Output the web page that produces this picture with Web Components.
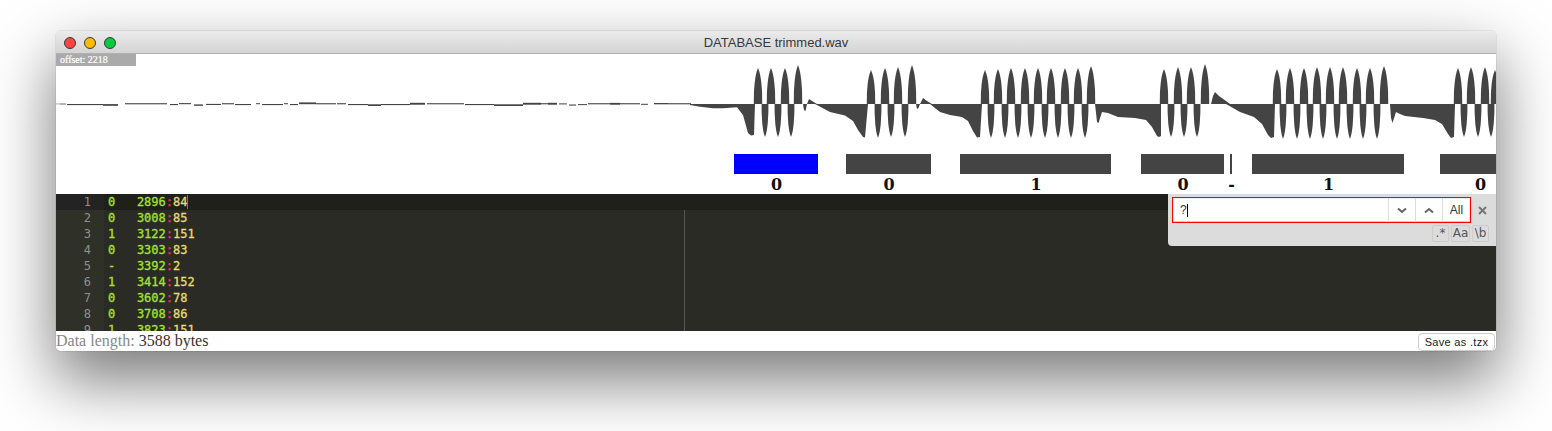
<!DOCTYPE html>
<html>
<head>
<meta charset="utf-8">
<title>DATABASE trimmed.wav</title>
<style>
  html, body { margin: 0; background: #fff; }
  body { padding: 31px 56px 0 56px; height: 431px; box-sizing: border-box; overflow: hidden; }
</style>
</head>
<body>
<app-window title="DATABASE trimmed.wav">
  <wave-view offset="2218"></wave-view>
  <bit-track>
    <bit-cell gap="678" size="84" label="0" active></bit-cell>
    <bit-cell gap="28" size="85" label="0"></bit-cell>
    <bit-cell gap="29" size="151" label="1"></bit-cell>
    <bit-cell gap="30" size="83" label="0"></bit-cell>
    <bit-cell gap="6" size="2" label="-"></bit-cell>
    <bit-cell gap="20" size="152" label="1"></bit-cell>
    <bit-cell gap="36" size="80" label="0"></bit-cell>
  </bit-track>
  <code-editor>
    <find-panel></find-panel>
  </code-editor>
  <status-bar>
    <span style="color:#888">Data length:</span> 3588 bytes
  </status-bar>
</app-window>

<script>
class AppWindow extends HTMLElement {
  constructor() {
    super();
    this.attachShadow({ mode: "open" });
  }
  connectedCallback() {
    this.shadowRoot.innerHTML = `
      <style>
        :host {
          display: block;
          width: 1440px;
          height: 320px;
          border-radius: 5px;
          overflow: hidden;
          background: #fff;
          box-shadow: 0 28px 64px 2px rgba(0,0,0,.52), 0 0 0 1px rgba(0,0,0,.06);
        }
        .bar {
          height: 22px;
          display: flex;
          align-items: center;
          justify-content: center;
          position: relative;
          background: linear-gradient(#ebebeb, #d4d4d4);
          border-bottom: 1px solid #b1b1b1;
          font: 13px "Liberation Sans", sans-serif;
          color: #383838;
        }
        .lights { position: absolute; left: 8px; top: 6px; display: flex; gap: 8px; }
        .lights i { display: block; width: 10px; height: 10px; border-radius: 50%; border: 1px solid; }
        .r { background: #ff4242; border-color: #f03a3a; }
        .y { background: #ffb900; border-color: #f0ae00; }
        .g { background: #00cc3c; border-color: #00c038; }
      </style>
      <div class="bar">
        <div class="lights"><i class="r"></i><i class="y"></i><i class="g"></i></div>
        ${this.getAttribute("title")}
      </div>
      <slot></slot>`;
  }
}

// thin bits of the quiet part before the tones start: x1, x2, y, height
const NOISE = [
  [60,66,103.6,.8],[67,103,104,1.1],[103,118,104.1,1.7],[125,167,103.2,1.1],[170,178,104,1.1],
  [179,191,103.1,1.1],[194,203,104.4,1.4],[206,221,103.9,1.1],[222,234,103.2,1.1],[235,251,104,1.1],
  [256,260,103.2,1],[262,283,104,1.1],[284,288,103.2,1],[290,298,104,1.1],[299,316,102.4,1.8],
  [316,336,103.2,1.1],[337,346,103.2,1.1],[348,368,104,1.1],[368,381,104.3,1.7],[381,410,104,1.1],
  [410,425,102.8,1.9],[427,464,103.2,1.1],[465,494,104,1.1],[494,523,104.3,1.7],[523,541,102.8,1.9],
  [541,548,103.2,1.1],[548,557,102.8,1.9],[559,567,103.4,1],[569,576,104.5,1.1],[578,587,104.1,1],
  [588,640,103.2,1.1],[610,620,102.9,1.7],[641,648,103.8,1],[654,668,103,1.3],[668,691,103.2,1.1]
];

// filled outline against the zero line, points are [x, y]
const ENVELOPES = [
  [[690,104],[690,105],[700,106.7],[713,108.3],[723,108.3],[737,107.3],[743,115],[748,133],[751,135.5],[754,135],[755,104]],
  [[803,104],[804,110],[805.5,111],[807,104],[809,99],[812,101],[817,104]],
  [[815,104],[830,112],[845,115.5],[853,121],[858,130],[863,137],[865,137.5],[868,104]],
  [[916,104],[917,109],[918.5,108],[920,104],[923,98],[927,101],[932,104]],
  [[930,104],[940,112],[950,115],[962,117],[968,121],[973,131],[977,137.5],[980,137],[982,104]],
  [[1095,104],[1097,122],[1098.5,123],[1102,112],[1108,113],[1118,117],[1135,118],[1146,120],[1152,127],[1157,136],[1159,137],[1161,136],[1161,104]],
  [[1209,104],[1211,104],[1213,96],[1215,92],[1219,96],[1226,101],[1230,104]],
  [[1226,104],[1240,112],[1254,117],[1262,124],[1268,135],[1271,138],[1274,137],[1275,104]],
  [[1390,104],[1391,118],[1392.5,123],[1396,112],[1400,114],[1405,116],[1423,118],[1435,120],[1442,124],[1448,134],[1451,138],[1454,137],[1455,104]]
];

const POS_LOBES = [
  [758,68],[771,68],[785,68],[798,65],
  [871,70],[885,68],[898,67],[912,65],
  [985,70],[998,69],[1011,68],[1025,68],[1038,68],[1051,68],[1065,68],[1078,68],[1091,66],
  [1164,69],[1178,67],[1191,67],[1205,64],
  [1277,69],[1290,68],[1304,68],[1317,67],[1330,67],[1343,67],[1357,68],[1370,68],[1384,66],
  [1458,68],[1471,67],[1485,67],[1495,70]
];
const NEG_LOBES = [
  [765,137],[778,137],[791,137],
  [878,138],[891,137],[905,137],
  [991,138],[1005,138],[1018,138],[1031,138],[1045,138],[1058,138],[1071,138],[1085,138],
  [1171,137],[1184,137],[1197,137],
  [1283,139],[1297,139],[1310,139],[1323,139],[1337,139],[1350,139],[1363,139],[1377,139],
  [1464,137],[1478,137],[1491,137]
];

// one half wave, narrows to a round tip
function lobePath(cx, hw, tip) {
  const steps = 10;
  let left = "", right = "";
  for (let i = 0; i <= steps; i++) {
    const f = i / steps;
    const w = hw * Math.pow(1 - Math.pow(f, 2.6), 0.8);
    const y = (104 + (tip - 104) * f).toFixed(1);
    left += `L${(cx - w).toFixed(1)} ${y}`;
    right = `L${(cx + w).toFixed(1)} ${y}` + right;
  }
  return "M" + left.slice(1) + right + "Z";
}

class WaveView extends HTMLElement {
  constructor() {
    super();
    this.attachShadow({ mode: "open" });
  }
  connectedCallback() {
    let d = "";
    ENVELOPES.forEach(pts => {
      d += "M" + pts.map(p => p.join(" ")).join("L") + "Z";
    });
    POS_LOBES.forEach(l => { d += lobePath(l[0], 4.2, l[1]); });
    NEG_LOBES.forEach(l => { d += lobePath(l[0], 3.4, l[1]); });
    const noise = NOISE.map(n =>
      `<rect x="${n[0]}" y="${n[2]}" width="${n[1] - n[0]}" height="${n[3]}"/>`).join("");
    this.shadowRoot.innerHTML = `
      <style>
        :host { display: block; height: 100px; position: relative; background: #fff; }
        svg { display: block; width: 1440px; height: 100px; }
        .offset {
          position: absolute; left: 0; top: 0;
          width: 76px; height: 12px; padding-left: 4px;
          background: #aaa; color: #fff;
          font: 10px/12px "Liberation Serif", serif;
          -webkit-text-stroke: .2px #fff;
        }
      </style>
      <svg viewBox="56 54 1440 100" fill="#444">
        <rect x="56" y="103.6" width="4" height=".7" opacity=".6"/>
        ${noise}
        <path d="${d}"/>
      </svg>
      <div class="offset">offset: ${this.getAttribute("offset")}</div>`;
  }
}

class BitTrack extends HTMLElement {
  constructor() {
    super();
    this.attachShadow({ mode: "open" });
    this.shadowRoot.innerHTML = `
      <style>
        :host { display: flex; height: 40px; overflow: hidden; background: #fff; }
      </style>
      <slot></slot>`;
  }
}

class BitCell extends HTMLElement {
  constructor() {
    super();
    this.attachShadow({ mode: "open" });
  }
  connectedCallback() {
    const size = this.getAttribute("size");
    const gap = this.getAttribute("gap");
    const color = this.hasAttribute("active") ? "#00f" : "#444";
    this.shadowRoot.innerHTML = `
      <style>
        :host {
          display: flex; flex: none; flex-direction: column; align-items: center;
          width: ${size}px; margin-left: ${gap}px;
        }
        .bar { flex: none; width: 100%; height: 20px; background: ${color}; }
        .label {
          padding: 2px 0 0 1px; white-space: nowrap; color: #111;
          font: bold 16px/18px "DejaVu Serif", serif;
        }
      </style>
      <div class="bar"></div>
      <div class="label">${this.getAttribute("label")}</div>`;
  }
}

const ROWS = [
  ["0", "2896", "84"], ["0", "3008", "85"], ["1", "3122", "151"],
  ["0", "3303", "83"], ["-", "3392", "2"], ["1", "3414", "152"],
  ["0", "3602", "78"], ["0", "3708", "86"], ["1", "3823", "151"]
];

class CodeEditor extends HTMLElement {
  constructor() {
    super();
    this.attachShadow({ mode: "open" });
  }
  connectedCallback() {
    const nums = ROWS.map((r, i) =>
      `<div class="num${i ? "" : " on"}">${i + 1}</div>`).join("");
    const lines = ROWS.map((r, i) =>
      `<div class="line${i ? "" : " on"}"><span class="g">${r[0]}   ${r[1]}</span><span class="p">:</span><span class="y">${r[2]}</span></div>`).join("");
    this.shadowRoot.innerHTML = `
      <style>
        :host {
          display: flex; height: 137px; overflow: hidden; position: relative;
          background: #2a2b24;
          font: 12px/16px "DejaVu Sans Mono", monospace;
        }
        .gutter { flex: none; width: 48px; background: #2f3129; color: #8f908a; }
        .num { height: 16px; text-align: right; padding-right: 13px; }
        .num.on { background: #232323; }
        .code { flex: 1; -webkit-text-stroke: .3px; }
        .line { height: 16px; padding-left: 4px; white-space: pre; }
        .line.on { background: #1f1f1c; }
        .g { color: #a6e22e; }
        .p { color: #f92672; }
        .y { color: #e6db74; }
        .margin { position: absolute; left: 628px; top: 16px; bottom: 0; width: 1px; background: #555; }
        .cursor { position: absolute; left: 131px; top: 1px; width: 1px; height: 14px; background: #777; }
        ::slotted(find-panel) { position: absolute; right: 0; top: 0; }
      </style>
      <div class="gutter">${nums}</div>
      <div class="code">${lines}</div>
      <div class="margin"></div>
      <div class="cursor"></div>
      <slot></slot>`;
  }
}

class FindPanel extends HTMLElement {
  constructor() {
    super();
    this.attachShadow({ mode: "open" });
    this.shadowRoot.innerHTML = `
      <style>
        :host {
          display: flex; flex-direction: column;
          width: 324px; height: 46px; padding: 3px 0 3px 4px; box-sizing: content-box;
          background: #dcdcdc; border-bottom-left-radius: 4px;
          font: 11px "Liberation Sans", sans-serif; color: #333;
        }
        .top { display: flex; align-items: center; height: 26px; }
        .search {
          display: flex; flex: none; width: 297px; height: 24px;
          border: 1px solid #f00; background: #fff;
          box-shadow: inset 0 -1px 0 #ccc, inset 0 0 0 1px #eee;
        }
        .field { flex: 1; display: flex; align-items: center; padding-left: 7px; font-size: 12px; }
        .caret { width: 1px; height: 13px; background: #000; }
        .btn {
          flex: none; width: 26px; display: flex; align-items: center; justify-content: center;
          border-left: 1px solid #ddd;
        }
        .btn.all { width: 27px; font-size: 12px; }
        .close { flex: none; width: 22px; display: flex; justify-content: center; }
        .opts { display: flex; justify-content: flex-end; gap: 2px; margin-top: 2px; padding-right: 7px; }
        .opt {
          height: 15px; border: 1px solid #ccc; border-radius: 2px;
          font: 12px/15px "DejaVu Sans", sans-serif; color: #555; text-align: center;
        }
        svg { display: block; }
      </style>
      <div class="top">
        <div class="search">
          <div class="field">?<span class="caret"></span></div>
          <div class="btn">
            <svg width="10" height="7" viewBox="0 0 10 7" fill="none" stroke="#666" stroke-width="2"><path d="M1 1.5 5 5 9 1.5"/></svg>
          </div>
          <div class="btn">
            <svg width="10" height="7" viewBox="0 0 10 7" fill="none" stroke="#666" stroke-width="2"><path d="M1 5.5 5 2 9 5.5"/></svg>
          </div>
          <div class="btn all">All</div>
        </div>
        <div class="close">
          <svg width="9" height="9" viewBox="0 0 9 9" fill="none" stroke="#777" stroke-width="2"><path d="M1 1 8 8M8 1 1 8"/></svg>
        </div>
      </div>
      <div class="opts">
        <div class="opt" style="width:15px">.*</div>
        <div class="opt" style="width:17px">Aa</div>
        <div class="opt" style="width:15px">\\b</div>
      </div>`;
  }
}

class StatusBar extends HTMLElement {
  constructor() {
    super();
    this.attachShadow({ mode: "open" });
    this.shadowRoot.innerHTML = `
      <style>
        :host {
          display: flex; align-items: center; justify-content: space-between;
          height: 20px; background: #fff; color: #333;
          font: 16px/20px "Liberation Serif", serif;
        }
        button {
          width: 77px; height: 18px; margin: 1px 1px 0 0; padding: 0;
          background: #fff; color: #222;
          border: 1px solid #ccc; border-radius: 4px;
          font: 11px "Liberation Sans", sans-serif; letter-spacing: .3px;
        }
      </style>
      <div><slot></slot></div>
      <button>Save as .tzx</button>`;
  }
}

// Defines the elements so they can be used in the HTML.
customElements.define("app-window", AppWindow);
customElements.define("wave-view", WaveView);
customElements.define("bit-track", BitTrack);
customElements.define("bit-cell", BitCell);
customElements.define("code-editor", CodeEditor);
customElements.define("find-panel", FindPanel);
customElements.define("status-bar", StatusBar);
</script>
</body>
</html>
